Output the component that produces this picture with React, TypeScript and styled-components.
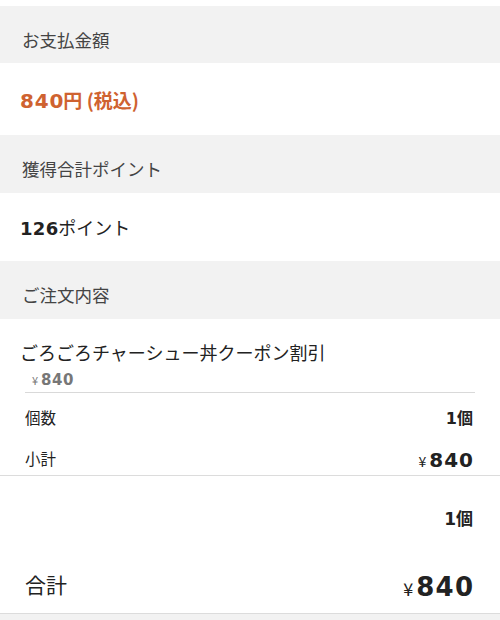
import React from "react";
import styled, { createGlobalStyle } from "styled-components";

const Global = createGlobalStyle`
  html, body { margin: 0; padding: 0; background: #fff; }
  body { font-family: "Noto Sans CJK JP", "Noto Sans", sans-serif; color: #333; }
`;

const Page = styled.div`
  width: 500px;
  padding-top: 6px;
  background: #fff;
`;

const SectionHeader = styled.div<{ $h: number }>`
  height: ${(p) => p.$h}px;
  box-sizing: border-box;
  background: #f2f2f2;
  display: flex;
  align-items: center;
  padding: 9px 0 0 22px;
  font-size: 17.5px;
  color: #444;
`;

const ValueRow = styled.div<{ $h: number }>`
  height: ${(p) => p.$h}px;
  display: flex;
  align-items: center;
  padding-left: 20px;
`;

const Price = styled.span`
  color: #cf6230;
  font-size: 19px;
  font-weight: 700;
`;

const Num = styled.span<{ $size?: number; $ls?: number }>`
  font-family: "DejaVu Sans", "Noto Sans CJK JP", sans-serif;
  font-weight: 700;
  font-size: ${(p) => p.$size ?? 18}px;
  letter-spacing: ${(p) => p.$ls ?? 0}px;
  margin-right: ${(p) => -(p.$ls ?? 0)}px;
`;

const Points = styled.span`
  font-size: 18px;
  color: #222;
  font-weight: 400;
`;

const Item = styled.div`
  padding: 20px 25px 0 20px;
`;

const ItemName = styled.div`
  font-size: 18px;
  color: #222;
  line-height: 26px;
`;

const ItemPrice = styled.div`
  color: #777;
  height: 27px;
  line-height: 27px;
  border-bottom: 1px solid #d9d9d9;
  margin-left: 5px;
  padding-left: 7px;
`;

const Yen = styled.span<{ $size: number }>`
  font-size: ${(p) => p.$size}px;
  font-weight: 400;
  margin-right: 3px;
`;

const DetailRows = styled.div`
  border-bottom: 1.5px solid #dcdcdc;
  padding: 0 27px 0 25px;
`;

const Row = styled.div<{ $h: number }>`
  height: ${(p) => p.$h}px;
  display: flex;
  align-items: center;
  justify-content: space-between;
  font-size: 15.5px;
  color: #222;
`;

const Qty = styled.span<{ $size: number }>`
  font-size: ${(p) => p.$size}px;
  font-weight: 700;
  color: #222;
`;

const Totals = styled.div`
  padding: 0 27px 3px 25px;
  border-bottom: 1.5px solid #dcdcdc;
`;

const TotalLabel = styled.span`
  font-size: 21px;
  color: #222;
`;

const Bottom = styled.div`
  height: 8px;
  background: #f2f2f2;
`;

export default function App() {
  return (
    <Page>
      <Global />
      <SectionHeader $h={57}>お支払金額</SectionHeader>
      <ValueRow $h={72}>
        <Price>
          <Num $size={20} $ls={0.8}>840</Num>円 (税込)
        </Price>
      </ValueRow>
      <SectionHeader $h={58}>獲得合計ポイント</SectionHeader>
      <ValueRow $h={68}>
        <Points>
          <Num $size={18} $ls={0.3}>126</Num>ポイント
        </Points>
      </ValueRow>
      <SectionHeader $h={58}>ご注文内容</SectionHeader>
      <Item>
        <ItemName>ごろごろチャーシュー丼クーポン割引</ItemName>
        <ItemPrice>
          <Yen $size={11}>¥</Yen>
          <Num $size={15} $ls={0.5}>840</Num>
        </ItemPrice>
      </Item>
      <DetailRows>
        <Row $h={48}>
          <span>個数</span>
          <Qty $size={16}>
            <Num $size={16}>1</Num>個
          </Qty>
        </Row>
        <Row $h={34}>
          <span>小計</span>
          <Qty $size={20}>
            <Yen $size={14}>¥</Yen>
            <Num $size={20} $ls={1}>840</Num>
          </Qty>
        </Row>
      </DetailRows>
      <Totals>
        <Row $h={82}>
          <span />
          <Qty $size={17}>
            <Num $size={17}>1</Num>個
          </Qty>
        </Row>
        <Row $h={52}>
          <TotalLabel>合計</TotalLabel>
          <Qty $size={26}>
            <Yen $size={18}>¥</Yen>
            <Num $size={26} $ls={1.2}>840</Num>
          </Qty>
        </Row>
      </Totals>
      <Bottom />
    </Page>
  );
}
